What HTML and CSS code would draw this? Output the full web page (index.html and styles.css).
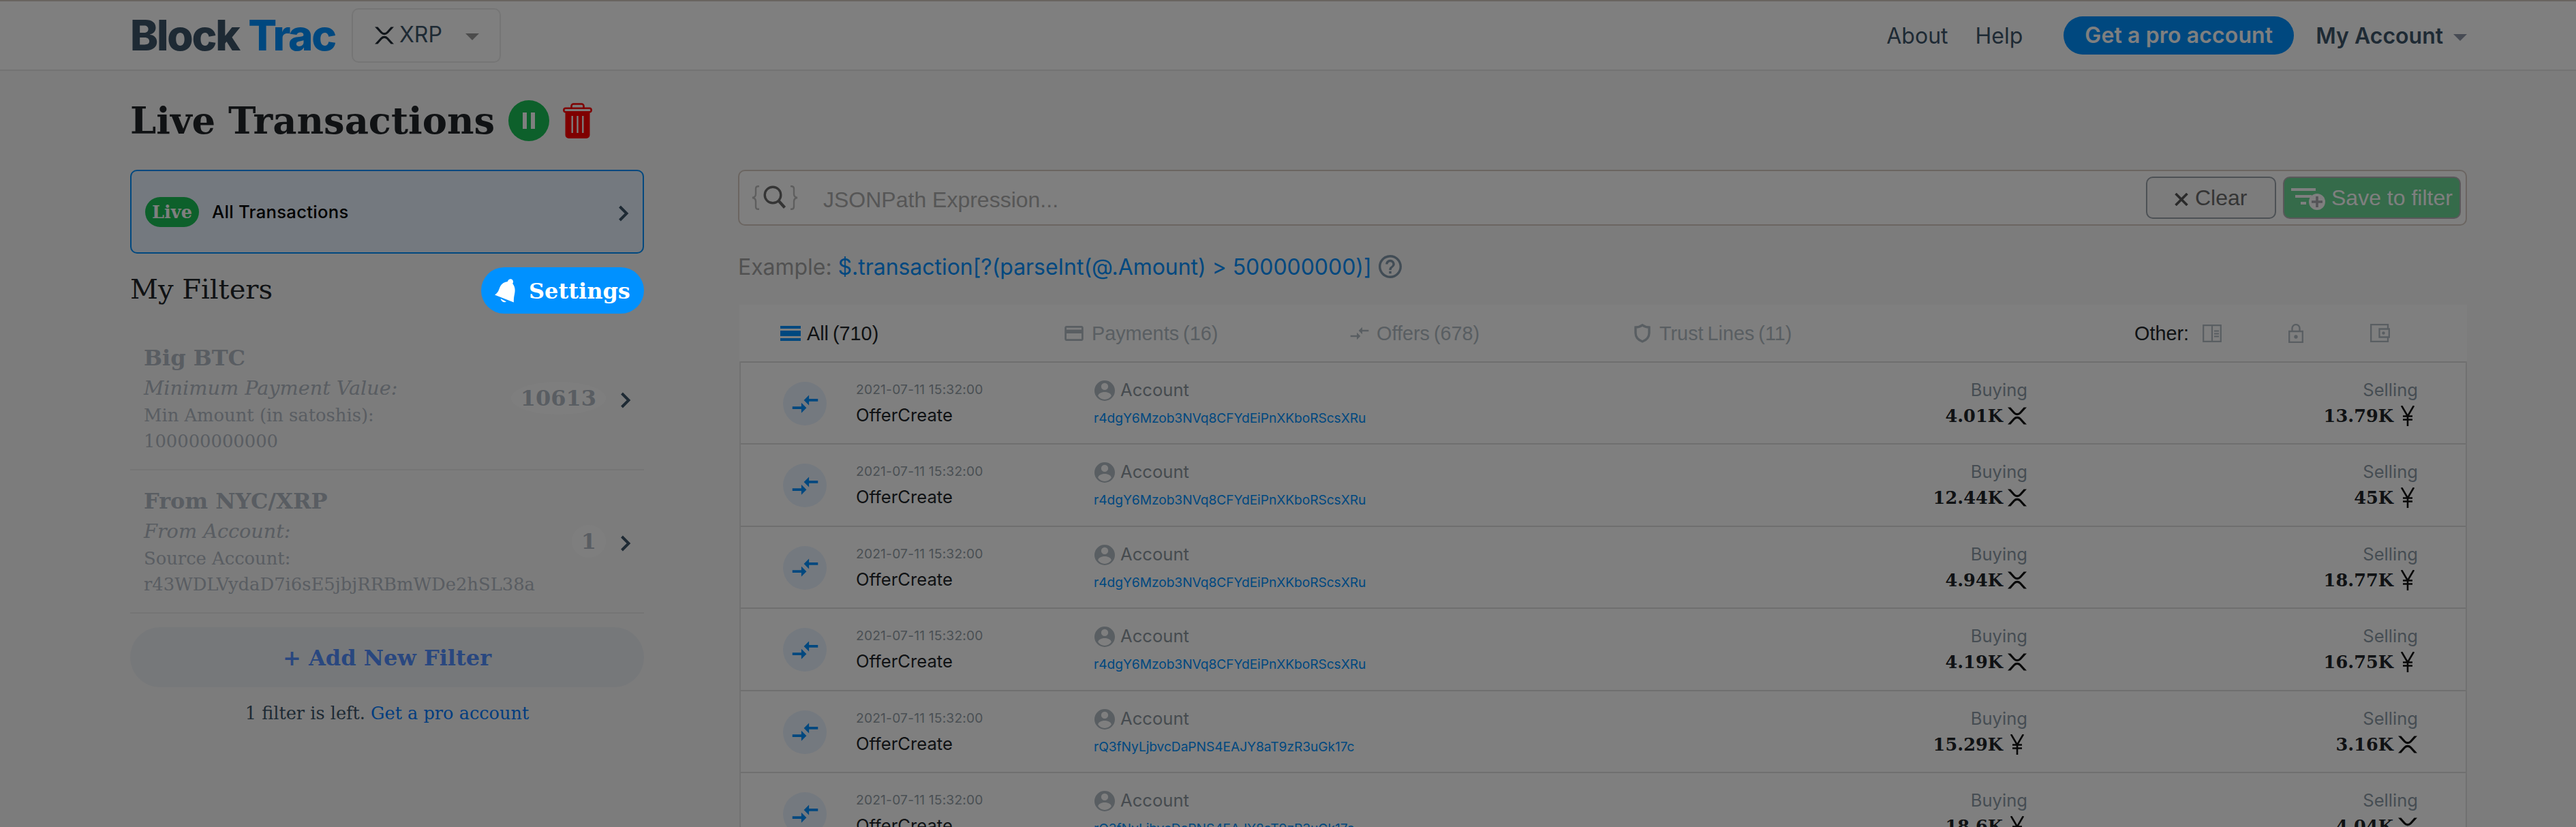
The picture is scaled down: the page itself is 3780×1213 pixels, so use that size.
FILE: index.html
```html
<!DOCTYPE html>
<html lang="en">
<head>
<meta charset="utf-8">
<title>Block Trac - Live Transactions</title>
<link rel="stylesheet" href="styles.css">
</head>
<body>
<svg class="sprite" width="0" height="0" aria-hidden="true">
  <symbol id="xrp" viewBox="0 0 30 26"><path d="M1 .5h4.400l6.200 6.900a4.600 4.600 0 0 0 6.800 0L24.600.5H29l-8.500 9.300a7.500 7.500 0 0 1-11 0zM1 25.500h4.400l6.200-6.900a4.600 4.600 0 0 1 6.800 0l6.200 6.900H29l-8.500-9.300a7.500 7.500 0 0 0-11 0z"/></symbol>
  <symbol id="yen" viewBox="0 0 20 30"><path d="M1 0l9 15.500L19 0M10 14v16M3 15.500h14M3 20.500h14" fill="none" stroke="currentColor" stroke-width="2.600"/></symbol>
  <symbol id="swap" viewBox="0 0 24 24"><path d="M9.010 14H2v2h7.010v3L13 15l-3.990-4v3zm5.980-1v-3H22V8h-7.010V5L11 9l3.990 4z"/></symbol>
  <symbol id="user" viewBox="2 2 20 20"><path fill-rule="evenodd" d="M12 2a10 10 0 1 0 0 20 10 10 0 0 0 0-20zM12 4.500a3.400 3.400 0 1 1 0 6.900 3.400 3.400 0 0 1 0-6.900zM12 13.300c3.500 0 6.500 1.700 6.500 3.900-1.300 2-3.800 3.400-6.500 3.400s-5.200-1.400-6.500-3.400c0-2.200 3-3.900 6.500-3.900z"/></symbol>
  <symbol id="chevron" viewBox="0 0 16 24"><path d="M2.500 2l10 10-10 10" fill="none" stroke="currentColor" stroke-width="4"/></symbol>
</svg>

<header class="topbar">
  <div class="logo">Block <span>Trac</span></div>
  <div class="ledger-select">
    <svg class="coin"><use href="#xrp"/></svg>
    <span>XRP</span>
    <i class="caret"></i>
  </div>
  <nav class="nav">
    <a class="about">About</a>
    <a class="help">Help</a>
    <a class="pro">Get a pro account</a>
    <a class="account">My Account<i class="caret caret-slate"></i></a>
  </nav>
</header>

<div class="page">
  <div class="title-row">
    <h1>Live Transactions</h1>
    <span class="pause"><i></i><i></i></span>
    <svg class="trash" viewBox="0 0 43 52">
      <path d="M12.500 8V4.500a3 3 0 0 1 3-3h12a3 3 0 0 1 3 3V8" fill="none" stroke="currentColor" stroke-width="2.600"/>
      <rect x="1.300" y="7.800" width="40.400" height="5.400" rx="2.700" fill="none" stroke="currentColor" stroke-width="2.400"/>
      <path fill="currentColor" fill-rule="evenodd" d="M3.500 14h36v33a5 5 0 0 1-5 5h-26a5 5 0 0 1-5-5zM12.500 19v25h2.400V19zM20.300 19v25h2.400V19zM28.100 19v25h2.400V19z"/>
    </svg>
  </div>

  <div class="columns">
    <aside class="sidebar">
      <div class="all-card">
        <span class="live">Live</span>
        <span class="all-label">All Transactions</span>
        <svg class="chevron"><use href="#chevron"/></svg>
      </div>
      <div class="filters-head">
        <h2>My Filters</h2>
        <button class="settings">
          <svg viewBox="0 0 30 35"><path fill="currentColor" d="M22 .5c2.400-.8 4.800.8 5 3.200.1 1.200-.2 2.200-.8 3.200 3.600 4.200 4 9.300 2.900 15-.8 4-1.400 7.500-1.200 12.600L0 23.500c4-2.800 5.500-5.500 7-10 1.800-5.200 5.500-8.700 11.500-9.300C19.500 2.500 20 1 22 .5zM8.500 29l8.500 4.400c-2.600 1.800-7.300.6-8.500-4.400z"/></svg>
          <span>Settings</span>
        </button>
      </div>
      <ul class="filters">
        <li>
          <div class="filter-text">
            <h3>Big BTC</h3>
            <em>Minimum Payment Value:</em>
            <p>Min Amount (in satoshis):<br>100000000000</p>
          </div>
          <span class="badge">10613</span>
          <svg class="chevron"><use href="#chevron"/></svg>
        </li>
        <li>
          <div class="filter-text">
            <h3>From NYC/XRP</h3>
            <em>From Account:</em>
            <p>Source Account:<br>r43WDLVydaD7i6sE5jbjRRBmWDe2hSL38a</p>
          </div>
          <span class="badge">1</span>
          <svg class="chevron"><use href="#chevron"/></svg>
        </li>
      </ul>
      <button class="add">+ Add New Filter</button>
      <p class="left-note">1 filter is left. <a>Get a pro account</a></p>
    </aside>

    <main class="main">
      <div class="search">
        <svg class="search-icon" viewBox="0 0 68 36">
          <path d="M11 1.200H9.500C7 1.200 6 2.500 6 5v7.500c0 3.500-1.500 5-5 5.500 3.500.5 5 2 5 5.500V31c0 2.500 1 3.800 3.500 3.800H11M57 1.200h1.500C61 1.200 62 2.500 62 5v7.500c0 3.500 1.500 5 5 5.500-3.500.5-5 2-5 5.500V31c0 2.500-1 3.800-3.500 3.800H57" fill="none" stroke="#bdbdbd" stroke-width="2.400"/>
          <circle cx="31" cy="14" r="11.800" fill="none" stroke="#6b6b6b" stroke-width="3.400"/>
          <path d="M39.500 22.500l9 10" stroke="#6b6b6b" stroke-width="4.200"/>
        </svg>
        <span class="placeholder">JSONPath Expression...</span>
        <button class="clear"><svg viewBox="0 0 20 19"><path d="M1.500 1l17 17M18.500 1l-17 17" stroke="currentColor" stroke-width="3.600"/></svg>Clear</button>
        <button class="save"><svg viewBox="0 0 50 32">
          <path d="M0 2h36M6 12h24M14 22h8" stroke="currentColor" stroke-width="4"/>
          <circle cx="38" cy="20" r="12" fill="currentColor"/>
          <path d="M30 20h16M38 12v16" stroke="#a8a8ae" stroke-width="3.600"/>
        </svg>Save to filter</button>
      </div>
      <div class="example">
        <span>Example:</span>
        <a>$.transaction[?(parseInt(@.Amount) &gt; 500000000)]</a>
        <svg viewBox="2 2 20 20"><path fill="currentColor" d="M11 18h2v-2h-2v2zm1-16C6.480 2 2 6.480 2 12s4.480 10 10 10 10-4.480 10-10S17.520 2 12 2zm0 18c-4.410 0-8-3.590-8-8s3.590-8 8-8 8 3.590 8 8-3.590 8-8 8zm0-14c-2.210 0-4 1.790-4 4h2c0-1.100.9-2 2-2s2 .9 2 2c0 2-3 1.750-3 5h2c0-2.250 3-2.500 3-5 0-2.210-1.790-4-4-4z"/></svg>
      </div>

      <section class="table">
        <div class="tabs">
          <div class="tab active"><svg class="ic-all" viewBox="0 0 30 22"><path fill="currentColor" d="M0 0h30v4H0zM0 7h30v8H0zM0 18h30v4H0z"/></svg>All (710)</div>
          <div class="tab"><svg class="ic-pay" viewBox="2 4 20 16"><path fill="currentColor" d="M20 4H4c-1.110 0-1.990.890-1.990 2L2 18c0 1.110.890 2 2 2h16c1.110 0 2-.890 2-2V6c0-1.110-.890-2-2-2zm0 14H4v-6h16v6zm0-10H4V6h16v2z"/></svg>Payments (16)</div>
          <div class="tab"><svg class="ic-off"><use href="#swap"/></svg>Offers (678)</div>
          <div class="tab"><svg class="ic-trust" viewBox="0 0 24 28"><path d="M12 1.800c3 2.200 6 3 10 3.200v8.300c0 6-4 10.500-10 12.700C6 23.800 2 19.300 2 13.300V5c4-.2 7-1 10-3.200z" fill="none" stroke="currentColor" stroke-width="3.400"/></svg>Trust Lines (11)</div>
          <div class="other">
            <span>Other:</span>
            <svg class="o1" viewBox="0 0 28 26"><path d="M1.200 1.200h25.600v23.600H1.200zM14 1v24M17 9.500h7M17 13.500h7M17 17.500h7" fill="none" stroke="currentColor" stroke-width="2.200"/></svg>
            <svg class="o2" viewBox="0 0 22 28"><path d="M1.200 11h19.600v15.800H1.200zM5.500 11V6.500a5.500 5.500 0 0 1 11 0V11" fill="none" stroke="currentColor" stroke-width="2.300"/><circle cx="11" cy="19" r="2.700" fill="currentColor"/></svg>
            <svg class="o3" viewBox="0 0 29 27"><path d="M26 7V1.200H1.200v24.600H26V20M13.500 7.500h14.300v12H13.500z" fill="none" stroke="currentColor" stroke-width="2.300"/><circle cx="19.500" cy="13.500" r="2.200" fill="currentColor"/></svg>
          </div>
        </div>

        <div class="rows">
          <div class="row">
            <span class="dot"><svg><use href="#swap"/></svg></span>
            <div class="type"><time>2021-07-11 15:32:00</time><b>OfferCreate</b></div>
            <div class="acct"><span><svg><use href="#user"/></svg>Account</span><a>r4dgY6Mzob3NVq8CFYdEiPnXKboRScsXRu</a></div>
            <div class="amt"><span>Buying</span><b>4.01K<svg><use href="#xrp"/></svg></b></div>
            <div class="amt"><span>Selling</span><b>13.79K<svg><use href="#yen"/></svg></b></div>
          </div>
          <div class="row">
            <span class="dot"><svg><use href="#swap"/></svg></span>
            <div class="type"><time>2021-07-11 15:32:00</time><b>OfferCreate</b></div>
            <div class="acct"><span><svg><use href="#user"/></svg>Account</span><a>r4dgY6Mzob3NVq8CFYdEiPnXKboRScsXRu</a></div>
            <div class="amt"><span>Buying</span><b>12.44K<svg><use href="#xrp"/></svg></b></div>
            <div class="amt"><span>Selling</span><b>45K<svg><use href="#yen"/></svg></b></div>
          </div>
          <div class="row">
            <span class="dot"><svg><use href="#swap"/></svg></span>
            <div class="type"><time>2021-07-11 15:32:00</time><b>OfferCreate</b></div>
            <div class="acct"><span><svg><use href="#user"/></svg>Account</span><a>r4dgY6Mzob3NVq8CFYdEiPnXKboRScsXRu</a></div>
            <div class="amt"><span>Buying</span><b>4.94K<svg><use href="#xrp"/></svg></b></div>
            <div class="amt"><span>Selling</span><b>18.77K<svg><use href="#yen"/></svg></b></div>
          </div>
          <div class="row">
            <span class="dot"><svg><use href="#swap"/></svg></span>
            <div class="type"><time>2021-07-11 15:32:00</time><b>OfferCreate</b></div>
            <div class="acct"><span><svg><use href="#user"/></svg>Account</span><a>r4dgY6Mzob3NVq8CFYdEiPnXKboRScsXRu</a></div>
            <div class="amt"><span>Buying</span><b>4.19K<svg><use href="#xrp"/></svg></b></div>
            <div class="amt"><span>Selling</span><b>16.75K<svg><use href="#yen"/></svg></b></div>
          </div>
          <div class="row">
            <span class="dot"><svg><use href="#swap"/></svg></span>
            <div class="type"><time>2021-07-11 15:32:00</time><b>OfferCreate</b></div>
            <div class="acct"><span><svg><use href="#user"/></svg>Account</span><a>rQ3fNyLjbvcDaPNS4EAJY8aT9zR3uGk17c</a></div>
            <div class="amt"><span>Buying</span><b>15.29K<svg><use href="#yen"/></svg></b></div>
            <div class="amt"><span>Selling</span><b>3.16K<svg><use href="#xrp"/></svg></b></div>
          </div>
          <div class="row">
            <span class="dot"><svg><use href="#swap"/></svg></span>
            <div class="type"><time>2021-07-11 15:32:00</time><b>OfferCreate</b></div>
            <div class="acct"><span><svg><use href="#user"/></svg>Account</span><a>rQ3fNyLjbvcDaPNS4EAJY8aT9zR3uGk17c</a></div>
            <div class="amt"><span>Buying</span><b>18.6K<svg><use href="#yen"/></svg></b></div>
            <div class="amt"><span>Selling</span><b>4.04K<svg><use href="#xrp"/></svg></b></div>
          </div>
        </div>
      </section>
    </main>
  </div>
</div>
<div class="backdrop"></div>
</body>
</html>
```

FILE: styles.css
```css
* { box-sizing: border-box; }
html, body { margin: 0; height: 1213px; overflow: hidden; }
body {
  position: relative;
  background: #f8f8f8;
  color: #212529;
  font-family: "DejaVu Serif", serif;
  font-size: 32px;
}
h1, h2, h3, p, ul { margin: 0; padding: 0; }
button { font: inherit; border: 0; padding: 0; margin: 0; }
svg { display: block; flex: none; fill: currentColor; }
.sprite { position: absolute; }

/* dims everything except the highlighted control */
.backdrop { position: absolute; inset: 0; background: rgba(0, 0, 0, .5); z-index: 10; }

.topbar {
  height: 104px;
  padding: 0 160px 0 191px;
  display: flex;
  align-items: center;
  background: #fff;
  border-top: 2px solid #d3c8c0;
  border-bottom: 2px solid #e7e7e7;
  font-family: Inter, sans-serif;
  color: #3d5469;
}
.logo { width: 325px; font: 800 62px/70px Inter, sans-serif; letter-spacing: -2.200px; word-spacing: 2px; white-space: nowrap; }
.logo span { color: #0091ff; }
.ledger-select {
  width: 219px; height: 80px;
  padding-left: 31px;
  display: flex; align-items: center;
  border: 2px solid #ebebeb; border-radius: 10px;
}
.ledger-select .coin { width: 30px; height: 26px; color: #212b35; }
.ledger-select span { width: 104px; padding-left: 7px; line-height: 40px; margin-top: -3px; font-size: 32px; }
.caret {
  border: 10px solid transparent; border-bottom: 0; border-top-color: #999;
  margin-top: 4px;
}
.caret-slate { display: inline-block; border-top-color: #8e96a8; margin: 0 0 4px 15px; }
.nav { margin-left: auto; display: flex; align-items: center; white-space: nowrap; }
.about { margin-right: 40px; }
.help { margin-right: 60px; }
.pro {
  width: 338px; height: 56px; line-height: 56px; text-align: center;
  border-radius: 28px; background: #0091ff; color: #fff; font-weight: 600;
  letter-spacing: .12px;
  margin-right: 32px;
}
.account { font-weight: 600; }

.page { padding: 43px 160px 0 191px; }
.title-row { height: 60px; display: flex; align-items: center; }
h1 { font-size: 54.400px; line-height: 60px; width: 555px; white-space: nowrap; }
.pause {
  width: 60px; height: 60px; border-radius: 50%; background: #1bc057;
  display: flex; align-items: center; justify-content: center; gap: 6px; margin-right: 20px;
}
.pause i { width: 6px; height: 24px; background: #fff; }
.trash { width: 43px; height: 52px; color: #f00; }

.columns { display: flex; justify-content: space-between; margin-top: 42px; }
.sidebar { width: 754px; }
.main { width: 2537px; }

.all-card {
  height: 123px; padding: 0 20px 0 20px;
  display: flex; align-items: center;
  background: #e8f2ff; border: 2px solid #0091ff; border-radius: 10px;
}
.live {
  width: 79px; height: 44px; line-height: 44px; border-radius: 22px; text-align: center;
  background: #1bc057; color: #fff; font-weight: 700; font-size: 25.600px;
}
.all-label { margin-left: 19px; font: 500 25.600px/40px Inter, sans-serif; letter-spacing: .3px; color: #000; }
.chevron { width: 16px; height: 24px; color: #3d5469; margin: 5px 0 0 auto; }

.filters-head { height: 68px; margin-top: 20px; display: flex; align-items: center; justify-content: space-between; }
h2 { font-weight: 400; font-size: 40px; line-height: 48px; margin-top: -4px; }
.settings {
  position: relative; z-index: 20;
  width: 239px; height: 68px; border-radius: 34px; padding-left: 20px;
  display: flex; align-items: center;
  background: #0091ff; color: #fff; font-weight: 700; line-height: 48px;
}
.settings svg { width: 30px; height: 35px; margin-right: 20px; }
.settings span { padding-top: 1px; }

.filters { list-style: none; margin-top: 20px; color: #b3bac4; }
.filters li {
  height: 210px; padding: 21px 19px 0 20px; display: flex; align-items: flex-start;
  border-bottom: 2px solid #eaeaea;
}
.filter-text { flex: 1; white-space: nowrap; }
h3 { font-size: 32px; line-height: 48px; }
.filters em { display: block; font-size: 28.700px; line-height: 41px; }
.filters p { font-size: 25.800px; line-height: 38.400px; }
.badge {
  height: 48px; line-height: 49px; min-width: 50px; padding: 0 14px; border-radius: 50%;
  background: #fdfdfd; font-weight: 700; text-align: center; margin: 59px 21px 0 0;
}
.filters .chevron { margin: 74px 0 0; }
.add {
  display: block; width: 754px; height: 88px; margin-top: 20px; padding-top: 2px; border-radius: 44px;
  background: #ecf0f5; color: #528eff; font-weight: 700;
}
.left-note { margin-top: 19px; line-height: 38px; font-size: 25.600px; text-align: center; color: #3d5469; }
.left-note a { color: #007bff; }

.search {
  height: 82px; padding: 0 7px 0 18px; display: flex; align-items: center;
  background: #fff; border: 2px solid #d6cbc3; border-radius: 10px;
  font-family: "Liberation Sans", sans-serif;
}
.search-icon { width: 68px; height: 36px; }
.placeholder { margin: 6px auto 0 37px; color: #adadad; }
.clear, .save {
  height: 62px; display: flex; align-items: center; white-space: nowrap;
  border: 2px solid #9aa3aa; border-radius: 10px;
}
.clear { width: 191px; padding-left: 40px; background: #f8f8f8; color: #6a6a6a; margin-right: 10px; }
.clear svg { width: 20px; height: 19px; margin: 4px 10px 0 0; color: #555; }
.save { width: 261px; padding-left: 10px; background: #6ad694; color: #fff; border-color: #b2b0b5; }
.save svg { width: 50px; height: 32px; margin: 4px 9px 0 0; }

.example {
  height: 38px; line-height: 38px; margin-top: 41px; display: flex; align-items: center;
  font-family: Inter, sans-serif; color: #a3a3a3; white-space: nowrap;
}
.example span, .example a { padding-top: 1px; letter-spacing: -.04px; }
.example a { color: #0091ff; margin: 0 12px 0 9px; }
.example svg { width: 34px; height: 34px; color: #8298aa; margin-left: -2px; }

.table { margin: 37px 0 0 2px; background: #fff; }
.tabs {
  height: 83px; padding: 0 0 0 60px; display: grid; align-items: center;
  grid-template-columns: 417px 418px 417px 735px 1fr;
  font: 28.800px/34px "Liberation Sans", sans-serif; color: #b2bcc4;
}
.tab, .other { display: flex; align-items: center; white-space: nowrap; }
.tab { word-spacing: -2px; }
.tab svg { margin-right: 12px; }
.active { color: #212529; }
.tab .ic-all { width: 30px; height: 22px; color: #0091ff; margin-right: 9px; }
.ic-pay { width: 28px; height: 22px; }
.tab .ic-off { width: 32px; height: 32px; margin: 0 9px 0 -1px; }
.tab .ic-trust { width: 24px; height: 28px; margin: 0 13px 0 1px; }
.other span { color: #212529; width: 100px; }
.o1 { width: 28px; height: 26px; margin-right: 98px; }
.o2 { width: 22px; height: 28px; margin-right: 98px; }
.o3 { width: 29px; height: 27px; }

.rows { border: solid #e2e2e2; border-width: 0 2px; font-family: Inter, sans-serif; }
.row {
  height: 120.400px; border-top: 2px solid #dedede; padding-left: 62px;
  display: grid; grid-template-columns: 107px 349px 800px 570px 573px; align-items: start;
}
.dot {
  width: 64px; height: 64px; margin-top: 28px; border-radius: 50%; background: #e8f2ff; color: #0091ff;
  display: flex; align-items: center; justify-content: center;
}
.dot svg { width: 45px; height: 45px; }
.type, .acct, .amt { display: flex; flex-direction: column; white-space: nowrap; font-size: 25.600px; line-height: 38px; }
.type { padding-top: 24px; }
.type time { font-size: 19.200px; line-height: 30px; letter-spacing: .2px; color: #949fa8; margin-bottom: 4px; }
.type b { font-weight: 400; }
.acct { padding-top: 21px; color: #8c969e; }
.acct span { display: flex; align-items: center; }
.acct svg { width: 30px; height: 30px; margin: 2px 8px 0 1px; color: #b2bcc4; }
.acct a { font-size: 19.200px; line-height: 30px; letter-spacing: -.06px; margin-top: 7px; color: #0091ff; }
.amt { padding-top: 21px; align-items: flex-end; color: #8c9aa6; }
.amt b { display: flex; align-items: center; font-family: "DejaVu Serif", serif; color: #212529; }
.amt svg { width: 30px; height: 30px; margin-left: 6px; color: #101010; }
```
